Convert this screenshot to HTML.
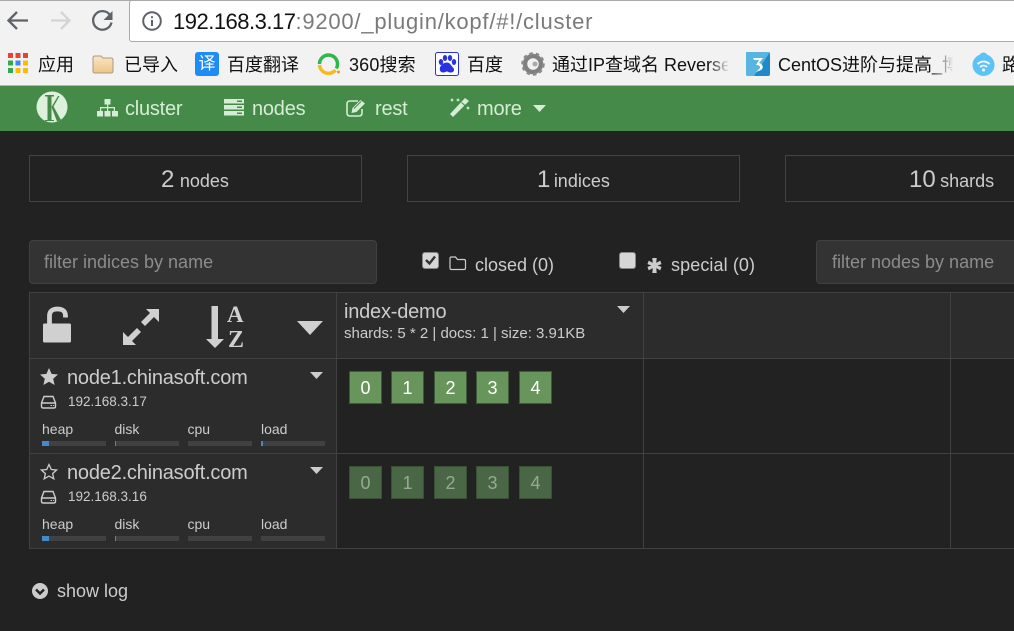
<!DOCTYPE html>
<html><head><meta charset="utf-8"><style>
html,body{margin:0;padding:0;width:1014px;height:631px;overflow:hidden;background:#222;font-family:"Liberation Sans","Noto Sans CJK SC",sans-serif}
.a,.t{position:absolute}
.t{white-space:nowrap;line-height:20px}
svg{position:absolute;overflow:visible}
.bm{font-size:18px;color:#111;top:55px;line-height:20px}
.n{color:#d5ecd5;font-size:20px;top:99px;letter-spacing:-.22px}
.box{position:absolute;top:155px;height:45px;border:1px solid #444;background:#222;box-sizing:content-box}
.big{font-size:24px;color:#ccc}
.sm{font-size:18px;color:#ccc}
.inp{position:absolute;top:240px;height:42px;background:#333;border:1px solid #414141;border-radius:4px;color:#8c8c8c;font-size:18px;line-height:42px;padding-left:15px;box-sizing:content-box}
.c{position:absolute;background:#2c2c2c}
.l{position:absolute;background:#414141}
.s{position:absolute;width:31px;height:31px;background:#68955b;border:1px solid #3f5a3a;color:#fff;font-size:18px;line-height:33px;text-align:center}
.s.o{background:#4a6745;color:#99a896;border-color:#3a4f36}
.lab{font-size:14px;color:#ccc}
.nm{font-size:20px;color:#ccc;letter-spacing:-.21px}
.bar{position:absolute;width:64px;height:5px;background:#414141}
.bar i{position:absolute;left:0;top:0;height:5px;background:#428bca}
</style></head><body>

<!-- browser chrome -->
<div class="a" style="left:0;top:0;width:1014px;height:85px;background:#f2f2f2"></div>
<div class="a" style="left:0;top:0;width:1014px;height:1px;background:#aaa"></div>
<div class="a" style="left:129px;top:0;width:890px;height:42px;background:#fff;border:1px solid #aaa;border-radius:3px;box-sizing:border-box"></div>
<div class="a" style="left:0;top:85px;width:1014px;height:1px;background:#b5b5b5"></div>

<svg style="left:0;top:0" width="130" height="40" fill="none">
<path d="M28 20.500H9M17 12l-8.500 8.500 8.500 8.500" stroke="#5f6368" stroke-width="2.300"/>
<path d="M51 20.500h18M61 12l8.500 8.500-8.500 8.500" stroke="#d4d4d4" stroke-width="2.300"/>
<path d="M110 15A9.300 9.300 0 1 0 111.500 22.500" stroke="#5f6368" stroke-width="2.300"/>
<path d="M112.500 11v9h-9z" fill="#5f6368"/>
</svg>
<svg style="left:142px;top:11px" width="20" height="20" fill="none">
<circle cx="10" cy="10" r="8.800" stroke="#5f6368" stroke-width="2"/>
<path d="M10 9v6M10 5.200v2" stroke="#5f6368" stroke-width="2"/>
</svg>
<div class="t" style="left:173px;top:12px;font-size:22px;color:#111;letter-spacing:-.5px">192.168.3.17<span style="color:#7a7a7a;letter-spacing:.78px">:9200/_plugin/kopf/#!/cluster</span></div>

<!-- bookmarks -->
<svg style="left:8px;top:53px" width="20" height="20">
<g fill="#ea4335"><rect width="5" height="5"/><rect x="7.500" width="5" height="5"/><rect x="15" width="5" height="5"/></g>
<rect y="7.500" width="5" height="5" fill="#34a853"/><rect x="7.500" y="7.500" width="5" height="5" fill="#4285f4"/><rect x="15" y="7.500" width="5" height="5" fill="#fbbc05"/>
<rect y="15" width="5" height="5" fill="#34a853"/><rect x="7.500" y="15" width="5" height="5" fill="#fbbc05"/><rect x="15" y="15" width="5" height="5" fill="#fbbc05"/>
</svg>
<div class="t bm" style="left:38px">应用</div>
<svg style="left:92px;top:55px" width="22" height="19">
<defs><linearGradient id="fg" x1="0" y1="0" x2="0" y2="1"><stop offset="0" stop-color="#f9e6c4"/><stop offset="1" stop-color="#efc488"/></linearGradient></defs>
<path d="M1 3q0-2 2-2h6l2 2h8q2 0 2 2v11q0 2-2 2H3q-2 0-2-2z" fill="url(#fg)" stroke="#a89a84"/>
</svg>
<div class="t bm" style="left:124px">已导入</div>
<div class="a" style="left:195px;top:52px;width:24px;height:24px;background:#1e8cf5;border-radius:3px;color:#fff;font-size:17px;line-height:23px;text-align:center">译</div>
<div class="t bm" style="left:227px">百度翻译</div>
<svg style="left:317px;top:53px" width="24" height="22" fill="none">
<path d="M2.500 11A9 9 0 1 1 19.300 15.500" stroke="#2fb84a" stroke-width="3.500"/>
<path d="M2.500 12A9 9 0 0 0 18.500 17" stroke="#f6bb22" stroke-width="3.500"/>
<circle cx="21.500" cy="19" r="1.500" fill="#f39c12"/>
</svg>
<div class="t bm" style="left:349px;letter-spacing:.15px">360搜索</div>
<svg style="left:435px;top:52px" width="24" height="24">
<rect x=".5" y=".5" width="23" height="23" rx="2" fill="#fff" stroke="#2932e1"/>
<g fill="#2932e1"><ellipse cx="6" cy="10" rx="2.200" ry="3"/><ellipse cx="10" cy="6" rx="2.200" ry="3"/><ellipse cx="15" cy="6" rx="2.200" ry="3"/><ellipse cx="19" cy="10" rx="2.200" ry="3"/>
<path d="M12 10.500c3 0 4 3 6 5s1 5-2 5-3-1-4-1-2 1-4 1-4-2-3-5 4-5 7-5z"/></g>
</svg>
<div class="t bm" style="left:467px">百度</div>
<svg style="left:521px;top:52px" width="24" height="24" fill="none">
<circle cx="12" cy="12" r="8" stroke="#808080" stroke-width="4.500"/>
<circle cx="12" cy="12" r="10.500" stroke="#8a8a8a" stroke-width="2.500" stroke-dasharray="3.500 3"/>
<circle cx="14" cy="12" r="2.500" fill="#aaa"/>
</svg>
<div class="t bm" style="left:552px;width:176px;overflow:hidden">通过IP查域名 Reverse</div>
<div class="a" style="left:708px;top:50px;width:22px;height:28px;background:linear-gradient(90deg,rgba(242,242,242,0),#f2f2f2)"></div>
<svg style="left:746px;top:52px" width="24" height="24">
<rect width="24" height="24" rx="2" fill="#1e8ac8"/><path d="M0 0h24L8 24H2q-2 0-2-2z" fill="#57b5e0"/>
<path d="M7 6h10l-4 5c4 1 5 5 2 7l-5 2 3-3c2-2 1-4-3-4l3-5H8z" fill="#fff"/>
</svg>
<div class="t bm" style="left:778px;width:175px;overflow:hidden">CentOS进阶与提高_博</div>
<div class="a" style="left:930px;top:50px;width:24px;height:28px;background:linear-gradient(90deg,rgba(242,242,242,0),#f2f2f2)"></div>
<svg style="left:971px;top:52px" width="26" height="24" fill="none">
<circle cx="12.500" cy="13" r="11" fill="#5cc3f7"/><circle cx="12.500" cy="5" r="4.500" fill="#5cc3f7"/>
<path d="M6.500 12q6-5 12 0M9 15q3.500-3 7 0" stroke="#fff" stroke-width="1.800"/><circle cx="12.500" cy="18" r="1.500" fill="#fff"/>
</svg>
<div class="t bm" style="left:1002px">路</div>

<!-- navbar -->
<div class="a" style="left:0;top:86px;width:1014px;height:45px;background:#458a48"></div>
<svg style="left:36px;top:91px" width="32" height="32">
<circle cx="16" cy="16" r="15.500" fill="#ddf0dc"/>
<path d="M9 4h9v1.500h-2.500V29H18v1H9v-1h2.500V5.500H9z" fill="#458a48"/>
<path d="M15.500 16L22 5h1.500L17.500 15.500 25 29l-4 1.500z" fill="#458a48"/>
</svg>
<svg style="left:97px;top:99px" width="21" height="18" fill="#d5ecd5">
<rect x="7.500" y="0" width="6" height="5.500"/><rect x="0" y="12" width="6" height="5.500"/><rect x="7.500" y="12" width="6" height="5.500"/><rect x="15" y="12" width="6" height="5.500"/>
<path d="M10 5h1.200v3H18v4h-1.200V9.200H11.200V12H10V9.200H4.200V12H3V8h7z"/>
</svg>
<div class="t n" style="left:125px">cluster</div>
<svg style="left:224px;top:99px" width="20" height="17" fill="#d5ecd5">
<rect width="20" height="4.500"/><rect y="6" width="20" height="4.500"/><rect y="12" width="20" height="4.500"/>
<g fill="#458a48"><rect x="13" y="1.500" width="5" height="1.500"/><rect x="13" y="7.500" width="5" height="1.500"/><rect x="13" y="13.500" width="5" height="1.500"/></g>
</svg>
<div class="t n" style="left:252px">nodes</div>
<svg style="left:346px;top:99px" width="21" height="18" fill="none">
<path d="M12 2H4Q1 2 1 5v9Q1 17 4 17h9Q16 17 16 14V10" stroke="#d5ecd5" stroke-width="1.600"/>
<path d="M6.500 9l8-8 4.500 3.500-8.500 8.500-5 1z" fill="#d5ecd5"/>
<path d="M8 9.500l7-7" stroke="#458a48" stroke-width="1"/>
</svg>
<div class="t n" style="left:375px">rest</div>
<svg style="left:449px;top:97px" width="21" height="21" fill="#d5ecd5">
<path d="M16 1l4 3L4 20l-3-3z"/>
<path d="M12.500 5.500l3.500 3" stroke="#458a48" stroke-width="1" fill="none"/>
<path d="M3 1l.7 1.300L5 3l-1.300.7L3 5l-.7-1.300L1 3l1.300-.7zM9 1l.7 1.300L11 3l-1.300.7L9 5l-.7-1.300L7 3l1.300-.7zM19 9l.7 1.300L21 11l-1.300.7L19 13l-.7-1.300L17 11l1.300-.7z"/>
</svg>
<div class="t n" style="left:477px">more</div>
<svg style="left:533px;top:105px" width="13" height="8"><path d="M0 0h13L6.500 7z" fill="#d5ecd5"/></svg>

<!-- summary boxes -->
<div class="box" style="left:29px;width:331px"></div>
<div class="t" style="left:161px;top:167px;line-height:26px"><span class="big">2</span> <span class="sm" style="margin-left:1px">nodes</span></div>
<div class="box" style="left:407px;width:331px"></div>
<div class="t" style="left:537px;top:167px;line-height:26px"><span class="big">1</span> <span class="sm" style="margin-left:-1px">indices</span></div>
<div class="box" style="left:785px;width:300px"></div>
<div class="t" style="left:909px;top:167px;line-height:26px"><span class="big">10</span> <span class="sm">shards</span></div>

<!-- filters -->
<div class="inp" style="left:29px;width:332px;padding-left:14px">filter indices by name</div>
<div class="inp" style="left:816px;width:250px">filter nodes by name</div>

<div class="a" style="left:422px;top:252px;width:15px;height:15px;background:#d6d6d6;border:1px solid #888;border-radius:3px"></div>
<svg style="left:424px;top:254px" width="13" height="13" fill="none"><path d="M2 6l3.500 3.500L11 2.500" stroke="#333" stroke-width="2.400"/></svg>
<svg style="left:449px;top:256px" width="18" height="15" fill="none"><path d="M1 2.500q0-1.500 1.500-1.500h4l2 2.500h6.500q1.500 0 1.500 1.500v7q0 1.500-1.500 1.500h-12.500q-1.500 0-1.500-1.500z" stroke="#ccc" stroke-width="1.200"/></svg>
<div class="t" style="left:475px;top:255px;font-size:18px;color:#ccc">closed (0)</div>

<div class="a" style="left:619px;top:252px;width:15px;height:15px;background:#d6d6d6;border:1px solid #888;border-radius:3px"></div>
<svg style="left:647px;top:258px" width="15" height="15" viewBox="0 0 16 17" fill="#ccc"><path d="M5.500 0h5l-.5 5.500L14.500 3 16 7l-4.500 1.500L16 10l-1.500 4-4.500-2.500.5 5.500h-5l.5-5.500L1.500 14 0 10l4.500-1.500L0 7l1.500-4L6 5.500z"/></svg>
<div class="t" style="left:671px;top:255px;font-size:18px;color:#ccc;letter-spacing:.1px">special (0)</div>

<!-- table -->
<div class="c" style="left:30px;top:293px;width:984px;height:65px"></div>
<div class="c" style="left:30px;top:359px;width:306px;height:189px"></div>
<div class="l" style="left:29px;top:292px;width:985px;height:1px"></div>
<div class="l" style="left:29px;top:358px;width:985px;height:1px"></div>
<div class="l" style="left:29px;top:453px;width:985px;height:1px"></div>
<div class="l" style="left:29px;top:548px;width:985px;height:1px"></div>
<div class="l" style="left:29px;top:292px;width:1px;height:257px"></div>
<div class="l" style="left:336px;top:292px;width:1px;height:257px"></div>
<div class="l" style="left:643px;top:292px;width:1px;height:257px"></div>
<div class="l" style="left:950px;top:292px;width:1px;height:257px"></div>

<!-- header icons -->
<svg style="left:43px;top:306px" width="28" height="37" fill="#d0d0d0">
<path d="M0 19q0-1.500 1.500-1.500h25q1.500 0 1.500 1.500v16q0 1.500-1.500 1.500h-25Q0 36.500 0 35z"/>
<path d="M6.500 18V10Q6.500 3 14.500 3 22.500 3 22.500 10v1.500" fill="none" stroke="#d0d0d0" stroke-width="4.800"/>
</svg>
<svg style="left:122px;top:308px" width="38" height="38" fill="#d0d0d0">
<path d="M24 1H37V14L32 9 23 18 19 14 28 5z"/>
<path d="M1 37V24L6 29 15 20 19 24 10 33 14 37z"/>
</svg>
<svg style="left:206px;top:306px" width="18" height="43" fill="#d0d0d0"><path d="M5.500 0h6.500v33h6L9 42 0 33h5.500z"/></svg>
<div class="t" style="left:227px;top:304px;font-size:23px;font-weight:bold;font-family:'Liberation Serif',serif;color:#d0d0d0;line-height:22px">A</div>
<div class="t" style="left:228px;top:329px;font-size:24px;font-weight:bold;font-family:'Liberation Serif',serif;color:#d0d0d0;line-height:22px">Z</div>
<svg style="left:297px;top:321px" width="26" height="14"><path d="M0 0h26L13 14z" fill="#d0d0d0"/></svg>

<div class="t nm" style="left:344px;top:302px">index-demo</div>
<div class="t" style="left:344px;top:324px;font-size:15px;color:#ccc">shards: 5 * 2 | docs: 1 | size: 3.91KB</div>
<svg style="left:617px;top:306px" width="13" height="7"><path d="M0 0h13L6.500 7z" fill="#ccc"/></svg>

<!-- node 1 -->
<svg style="left:40px;top:368px" width="18" height="17"><path d="M9 0l2.600 5.900 6.400.6-4.800 4.200 1.400 6.300L9 13.700 3.400 17l1.400-6.300L0 6.500l6.400-.6z" fill="#ccc"/></svg>
<div class="t nm" style="left:67px;top:368px">node1.chinasoft.com</div>
<svg style="left:310px;top:372px" width="13" height="7"><path d="M0 0h13L6.500 7z" fill="#ccc"/></svg>
<svg style="left:40px;top:395px" width="18" height="14" fill="none"><path d="M1.500 8L4 1.500h9L15.500 8v3.500q0 1.500-1.500 1.500H3q-1.500 0-1.500-1.500zM1.500 8h14" stroke="#ccc" stroke-width="1.400"/><path d="M10.500 10.500h1.500M13 10.500h1" stroke="#ccc"/></svg>
<div class="t" style="left:68px;top:392px;font-size:13.500px;color:#ccc">192.168.3.17</div>
<div class="t lab" style="left:42px;top:419px">heap</div>
<div class="t lab" style="left:114.500px;top:419px">disk</div>
<div class="t lab" style="left:187.500px;top:419px">cpu</div>
<div class="t lab" style="left:261px;top:419px">load</div>
<div class="bar" style="left:42px;top:441px"><i style="width:7px"></i></div>
<div class="bar" style="left:115px;top:441px"><i style="width:1px"></i></div>
<div class="bar" style="left:188px;top:441px"></div>
<div class="bar" style="left:261px;top:441px"><i style="width:2px"></i></div>

<!-- node 2 -->
<svg style="left:40px;top:463px" width="18" height="17"><path d="M9 1.500l2.300 5 5.300.5-4 3.600 1.200 5.200L9 13.100l-4.800 2.700 1.200-5.200-4-3.600 5.300-.5z" fill="none" stroke="#ccc" stroke-width="1.300"/></svg>
<div class="t nm" style="left:67px;top:463px">node2.chinasoft.com</div>
<svg style="left:310px;top:467px" width="13" height="7"><path d="M0 0h13L6.500 7z" fill="#ccc"/></svg>
<svg style="left:40px;top:490px" width="18" height="14" fill="none"><path d="M1.500 8L4 1.500h9L15.500 8v3.500q0 1.500-1.500 1.500H3q-1.500 0-1.500-1.500zM1.500 8h14" stroke="#ccc" stroke-width="1.400"/><path d="M10.500 10.500h1.500M13 10.500h1" stroke="#ccc"/></svg>
<div class="t" style="left:68px;top:487px;font-size:13.500px;color:#ccc">192.168.3.16</div>
<div class="t lab" style="left:42px;top:514px">heap</div>
<div class="t lab" style="left:114.500px;top:514px">disk</div>
<div class="t lab" style="left:187.500px;top:514px">cpu</div>
<div class="t lab" style="left:261px;top:514px">load</div>
<div class="bar" style="left:42px;top:536px"><i style="width:7px"></i></div>
<div class="bar" style="left:115px;top:536px"><i style="width:1px"></i></div>
<div class="bar" style="left:188px;top:536px"></div>
<div class="bar" style="left:261px;top:536px"></div>

<!-- shards -->
<div class="s" style="left:349px;top:371px">0</div>
<div class="s" style="left:391px;top:371px">1</div>
<div class="s" style="left:434px;top:371px">2</div>
<div class="s" style="left:476px;top:371px">3</div>
<div class="s" style="left:519px;top:371px">4</div>
<div class="s o" style="left:349px;top:466px">0</div>
<div class="s o" style="left:391px;top:466px">1</div>
<div class="s o" style="left:434px;top:466px">2</div>
<div class="s o" style="left:476px;top:466px">3</div>
<div class="s o" style="left:519px;top:466px">4</div>

<!-- log -->
<svg style="left:32px;top:583px" width="16" height="16"><circle cx="8" cy="8" r="8" fill="#ccc"/><path d="M4 6.500l4 4 4-4" fill="none" stroke="#222" stroke-width="2.400"/></svg>
<div class="t" style="left:57px;top:581px;font-size:18px;color:#ccc">show log</div>
</body></html>
